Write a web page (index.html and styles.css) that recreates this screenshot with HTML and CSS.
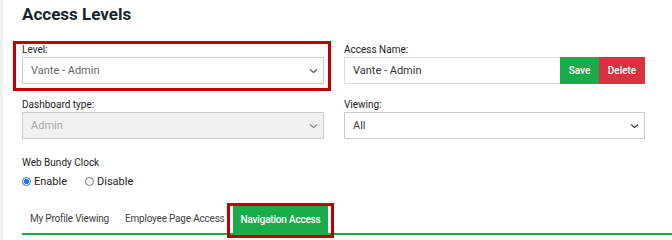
FILE: index.html
```html
<!DOCTYPE html>
<html lang="en">
<head>
  <meta charset="UTF-8" />
  <meta name="viewport" content="width=device-width, initial-scale=1.0" />
  <title>Access Levels</title>
  <link rel="stylesheet" href="styles.css">
</head>
<body>
  <div class="page">
    <h1>Access Levels</h1>
    <div class="form-grid">
      <div class="field">
        <label>Level:</label>
        <div class="select">
          <span>Vante - Admin</span>
          <svg class="chev" width="9" height="6" viewBox="0 0 9 6"><path d="M1 1.5 L4.5 4.5 L8 1.5" fill="none" stroke="#555" stroke-width="1.2"/></svg>
        </div>
      </div>
      <div class="field">
        <label>Access Name:</label>
        <div class="input-group">
          <div class="input">Vante - Admin</div>
          <button class="btn btn-save">Save</button>
          <button class="btn btn-delete">Delete</button>
        </div>
      </div>
      <div class="field">
        <label>Dashboard type:</label>
        <div class="select disabled">
          <span>Admin</span>
          <svg class="chev" width="9" height="6" viewBox="0 0 9 6"><path d="M1 1.5 L4.5 4.5 L8 1.5" fill="none" stroke="#888" stroke-width="1.2"/></svg>
        </div>
      </div>
      <div class="field">
        <label>Viewing:</label>
        <div class="select">
          <span class="dark">All</span>
          <svg class="chev" width="9" height="6" viewBox="0 0 9 6"><path d="M1 1.5 L4.5 4.5 L8 1.5" fill="none" stroke="#444" stroke-width="1.3"/></svg>
        </div>
      </div>
    </div>

    <div class="bundy">
      <label>Web Bundy Clock</label>
      <div class="radios">
        <span class="radio checked"></span><span class="radio-text">Enable</span>
        <span class="radio"></span><span class="radio-text">Disable</span>
      </div>
    </div>

    <div class="tabs">
      <div class="tab">My Profile Viewing</div>
      <div class="tab">Employee Page Access</div>
      <div class="tab active">Navigation Access</div>
    </div>
  </div>

  <div class="mark mark-level"></div>
  <div class="mark mark-tab"></div>
</body>
</html>
```

FILE: styles.css
```css
body {
  margin: 0;
  font-family: Roboto, "Liberation Sans", sans-serif;
  color: #333;
  background: #fff;
  border-left: 3px solid #f1f1f1;
  height: 240px;
  overflow: hidden;
}
.page {
  padding: 0 0 0 19px;
}
h1 {
  margin: 0;
  padding-top: 3px;
  font-size: 17px;
  line-height: 22px;
  font-weight: 700;
  color: #17252a;
}
.form-grid {
  display: grid;
  grid-template-columns: 302px 301px;
  column-gap: 20px;
  row-gap: 15px;
  margin-top: 19px;
}
.field label {
  display: block;
  font-size: 10px;
  line-height: 12px;
  margin-bottom: 1px;
  color: #222;
}
.select {
  height: 27px;
  box-sizing: border-box;
  border: 1px solid #ccc;
  display: flex;
  align-items: center;
  justify-content: space-between;
  padding: 0 5px 0 8px;
  font-size: 11px;
  color: #666;
  background: #fff;
}
.select .dark {
  color: #444;
}
.select.disabled {
  background: #f1f1f1;
  color: #aaa;
}
.chev {
  display: block;
}
.input-group {
  display: flex;
  height: 27px;
}
.input {
  flex: 1;
  box-sizing: border-box;
  border: 1px solid #ddd;
  border-right: none;
  padding: 0 8px;
  display: flex;
  align-items: center;
  font-size: 11px;
  color: #333;
}
.btn {
  border: none;
  color: #fff;
  font-family: inherit;
  font-size: 10px;
  font-weight: 500;
  padding: 0;
  height: 27px;
}
.btn-save {
  background: #1aab4b;
  width: 39px;
}
.btn-delete {
  background: #dc3140;
  width: 46px;
}
.bundy {
  margin-top: 18px;
}
.bundy label {
  display: block;
  font-size: 10px;
  line-height: 12px;
  color: #222;
}
.radios {
  display: flex;
  align-items: center;
  margin-top: 6px;
  font-size: 11px;
  color: #222;
}
.radio {
  width: 9px;
  height: 9px;
  box-sizing: border-box;
  border: 1px solid #777;
  border-radius: 50%;
}
.radio.checked {
  border: 1px solid #1a73e8;
  background: radial-gradient(circle, #1a73e8 0 2.4px, #fff 2.8px);
}
.radio-text {
  margin-left: 3px;
  margin-right: 18px;
}
.tabs {
  display: flex;
  margin-top: 17px;
  border-bottom: 2px solid #1aab4b;
  height: 28px;
}
.tab {
  padding: 0 8px;
  height: 27px;
  display: flex;
  align-items: center;
  font-size: 10px;
  letter-spacing: -0.2px;
  color: #444;
}
.tab.active {
  background: #1aab4b;
  color: #fff;
  font-weight: 500;
  margin-top: 1px;
}
.mark {
  position: absolute;
  border: 3px solid #c00000;
  box-sizing: border-box;
}
.mark-level {
  left: 13px;
  top: 41px;
  width: 318px;
  height: 50px;
}
.mark-tab {
  left: 227px;
  top: 203px;
  width: 107px;
  height: 35px;
}
```
